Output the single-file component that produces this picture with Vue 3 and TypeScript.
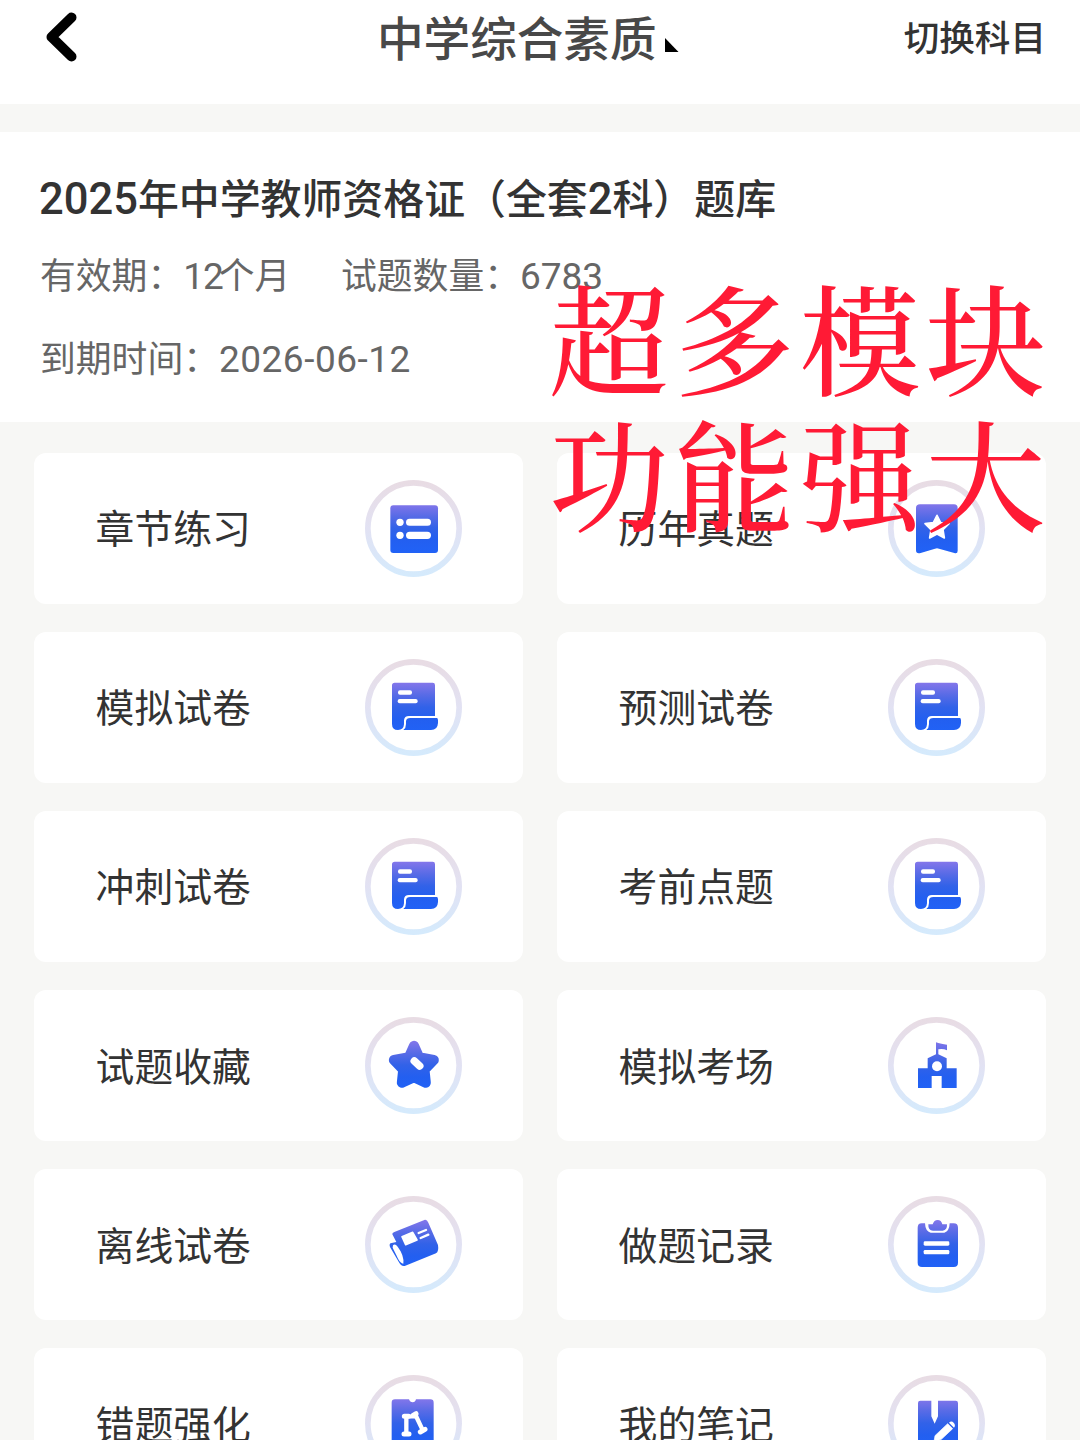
<script setup lang="ts">
type IconName =
  | 'list' | 'bookmark' | 'paper' | 'star' | 'school' | 'news' | 'clipboard' | 'strength' | 'note'

interface Module {
  label: string
  icon: IconName
}

const modules: Module[] = [
  { label: '章节练习', icon: 'list' },
  { label: '历年真题', icon: 'bookmark' },
  { label: '模拟试卷', icon: 'paper' },
  { label: '预测试卷', icon: 'paper' },
  { label: '冲刺试卷', icon: 'paper' },
  { label: '考前点题', icon: 'paper' },
  { label: '试题收藏', icon: 'star' },
  { label: '模拟考场', icon: 'school' },
  { label: '离线试卷', icon: 'news' },
  { label: '做题记录', icon: 'clipboard' },
  { label: '错题强化', icon: 'strength' },
  { label: '我的笔记', icon: 'note' },
]

const slogan: string[] = ['超多模块', '功能强大']
</script>

<template>
  <div class="page">
    <svg class="defs" width="0" height="0" aria-hidden="true">
      <defs>
        <linearGradient id="ringFill" x1="0" y1="0" x2="0" y2="1">
          <stop offset="0" stop-color="#e8dce4" />
          <stop offset="0.5" stop-color="#e2e2f3" />
          <stop offset="1" stop-color="#d5eafc" />
        </linearGradient>
        <linearGradient id="iconFill" gradientUnits="userSpaceOnUse" x1="0" y1="72" x2="0" y2="216">
          <stop offset="0" stop-color="#8376ea" />
          <stop offset="0.25" stop-color="#586be6" />
          <stop offset="0.5" stop-color="#3262e8" />
          <stop offset="0.75" stop-color="#235ff0" />
          <stop offset="1" stop-color="#2162f6" />
        </linearGradient>
      </defs>
    </svg>

    <header class="topbar">
      <svg class="back" width="32" height="50" viewBox="0 0 32 50">
        <path d="M25.500 5.500 5.500 25 25.500 44.500" fill="none" stroke="#000" stroke-width="10" stroke-linecap="round" stroke-linejoin="round" />
      </svg>
      <div class="subject">
        <span>中学综合素质</span>
        <svg class="caret" width="14" height="14" viewBox="0 0 14 14"><path d="M0 0 13.500 14H0z" fill="#000" /></svg>
      </div>
      <span class="switch">切换科目</span>
    </header>

    <section class="summary">
      <h1><span class="num">2025</span>年中学教师资格证（全套<span class="num">2</span>科）题库</h1>
      <div class="meta">
        <span class="term">有效期：<span class="num months">12</span>个月</span>
        <span>试题数量：<span class="num">6783</span></span>
      </div>
      <div class="meta expiry"><span>到期时间：<span class="num date">2026-06-12</span></span></div>
      <div class="slogan">
        <div v-for="line in slogan" :key="line">{{ line }}</div>
      </div>
    </section>

    <main class="grid">
      <div v-for="m in modules" :key="m.label" class="card">
        <span class="label">{{ m.label }}</span>
        <svg class="icon" width="97" height="97" viewBox="0 0 291 291">
          <circle cx="145.500" cy="145.500" r="137" fill="#fff" stroke="url(#ringFill)" stroke-width="17" />

          <g v-if="m.icon === 'list'">
            <rect x="76" y="76" width="143" height="143" rx="9" fill="url(#iconFill)" />
            <g fill="#fff">
              <circle cx="105" cy="127" r="11" /><circle cx="105" cy="166" r="11" />
              <rect x="123" y="116" width="75" height="21" rx="10.500" />
              <rect x="123" y="155" width="75" height="22" rx="11" />
            </g>
          </g>

          <g v-else-if="m.icon === 'bookmark'">
            <path d="M96 73H198Q209 73 209 84V212Q209 222 199 219L153 206Q147 204 141 206L98 219Q84 223 84 210V84Q84 73 96 73Z" fill="url(#iconFill)" />
            <path d="M147 106 158 128 183 131 165 149 169 174 147 162 125 174 129 149 111 131 136 128Z" fill="#fff" stroke="#fff" stroke-width="5" stroke-linejoin="round" />
          </g>

          <g v-else-if="m.icon === 'paper'">
            <path d="M89 71H203Q210 71 210 78V171H132Q118 171 117 184V196Q116 213 99 213 81 213 81 195V79Q81 71 89 71Z" fill="url(#iconFill)" />
            <path d="M136 177H215Q219 177 219 184V192Q218 213 198 213H115Q123 207 123 195V187Q124 177 136 177Z" fill="url(#iconFill)" />
            <rect x="99" y="94" width="42" height="13" rx="6" fill="#fff" />
            <rect x="98" y="120" width="60" height="13" rx="6" fill="#fff" />
          </g>

          <g v-else-if="m.icon === 'star'">
            <path d="M147 87 162 121 206 129 178 158 182 197 147 180 111 197 115 158 87 129 132 121Z" fill="url(#iconFill)" stroke="url(#iconFill)" stroke-width="31" stroke-linejoin="round" />
            <path d="M148 132 164 147" stroke="#fff" stroke-width="23" stroke-linecap="round" />
          </g>

          <g v-else-if="m.icon === 'school'">
            <path d="M144 76V112L119 124V154H90V213H131V177H161V213H206V154H176V124L151 112V97Q165 94 177 100V83Q164 82 151 78Z" fill="url(#iconFill)" />
            <circle cx="147" cy="148" r="15" fill="#fff" />
          </g>

          <g v-else-if="m.icon === 'news'">
            <path d="M88 108 180 71Q186 70 190 80L219 147Q222 167 213 172L121 209Q109 213 101 197L75 153Q71 142 80 141L94 138 82 115Q81 111 88 108Z" fill="url(#iconFill)" />
            <path d="M84 148Q90 142 98 152 118 178 115 203 106 202 100 190L83 155Z" fill="#fff" />
            <path d="M111 122 143 109 156 132 122 146Z" fill="#fff" stroke="#fff" stroke-width="5" stroke-linejoin="round" />
            <path d="M161 111 183 102M167 126 190 116" stroke="#fff" stroke-width="7" stroke-linecap="round" />
          </g>

          <g v-else-if="m.icon === 'clipboard'">
            <path d="M101 82H111Q112 106 128 110H169Q184 106 185 82H197Q210 82 210 95V200Q210 213 197 213H102Q89 213 89 200V95Q89 82 101 82Z" fill="url(#iconFill)" />
            <path d="M121 85H134Q138 72 149 72T163 85H177Q178 103 164 104H135Q120 104 121 85Z" fill="url(#iconFill)" />
            <rect x="107" y="136" width="77" height="13" rx="4" fill="#fff" />
            <rect x="107" y="162" width="77" height="13" rx="4" fill="#fff" />
          </g>

          <g v-else-if="m.icon === 'strength'">
            <path d="M90 73H132Q135 82 143 82T153 73H196Q206 73 206 83V205Q206 215 196 215H90Q80 215 80 205V83Q80 73 90 73Z" fill="url(#iconFill)" />
            <g fill="none" stroke="#fff" stroke-linecap="round">
              <path d="M124 124V176M153 123 172 163" stroke-width="13" />
              <path d="M118 124H131M117 177H132M144 121 153 116M166 171 180 163" stroke-width="15" />
              <path d="M128 127H150" stroke-width="7" />
            </g>
          </g>

          <g v-else>
            <path d="M97 77H130V124L140 146 150 124V77H203Q210 77 210 84V205Q210 215 201 215H98Q90 215 90 205V84Q90 77 97 77Z" fill="url(#iconFill)" />
            <path d="M138 200 141 182 179 146 194 161 160 193Z" fill="#fff" stroke="#fff" stroke-width="2" stroke-linejoin="round" />
            <path d="M183 143Q190 136 197 143T198 158Z" fill="#fff" />
          </g>
        </svg>
      </div>
    </main>
  </div>
</template>

<style>
body {
  margin: 0;
  overflow: hidden;
}
</style>

<style scoped>
.page {
  width: 1080px;
  height: 1440px;
  overflow: hidden;
  background: #f7f7f5;
  color: #333;
  font-family: "Noto Sans CJK SC", sans-serif;
}
.defs {
  position: absolute;
}
.topbar {
  display: grid;
  grid-template-columns: 331px 1fr 331px;
  align-items: start;
  height: 104px;
  background: #fff;
}
.back {
  margin: 12px 0 0 46px;
}
.subject {
  display: flex;
  padding-left: 46px;
  font-size: 46.600px;
  font-weight: 500;
  line-height: 72px;
  color: #484848;
  white-space: nowrap;
}
.caret {
  margin: 38px 0 0 8px;
}
.switch {
  justify-self: end;
  margin-right: 34px;
  font-size: 35.600px;
  font-weight: 500;
  line-height: 72px;
}
.summary {
  position: relative;
  box-sizing: border-box;
  height: 290px;
  margin-top: 28px;
  padding: 35px 39px 0;
  background: #fff;
}
h1 {
  margin: 0;
  font-size: 40.900px;
  line-height: 60px;
  font-weight: 500;
  white-space: nowrap;
}
.num {
  font-family: Roboto, "Noto Sans", sans-serif;
}
h1 .num {
  font-size: 43.500px;
}
.meta {
  display: flex;
  margin-top: 16px;
  padding-left: 1px;
  font-size: 35.800px;
  line-height: 54px;
  height: 54px;
  color: #666;
  white-space: nowrap;
}
.meta .num {
  font-size: 37px;
}
.meta .months {
  margin-right: -4px;
  letter-spacing: -1px;
}
.meta .date {
  letter-spacing: 0.500px;
}
.term {
  width: 301px;
}
.expiry {
  margin-top: 29px;
}
.slogan {
  position: absolute;
  z-index: 1;
  top: 135px;
  left: 549px;
  font-family: "Noto Serif CJK SC", "Source Han Serif SC", "Noto Serif SC", "Songti SC", SimSun, "Noto Sans CJK SC", serif;
  font-size: 120px;
  font-weight: 500;
  letter-spacing: 5.500px;
  line-height: 136px;
  color: #ff1a35;
  white-space: nowrap;
}
.grid {
  display: grid;
  grid-template-columns: 489px 489px;
  grid-auto-rows: 150.500px;
  gap: 28.600px 34px;
  padding: 31px 34px 0;
}
.card {
  display: flex;
  align-items: center;
  justify-content: space-between;
  padding: 0 61px;
  border-radius: 12px;
  background: #fff;
}
.label {
  padding-bottom: 4px;
  padding-left: 0.600px;
  font-size: 38.800px;
  line-height: 60px;
}
.icon {
  display: block;
}
</style>
